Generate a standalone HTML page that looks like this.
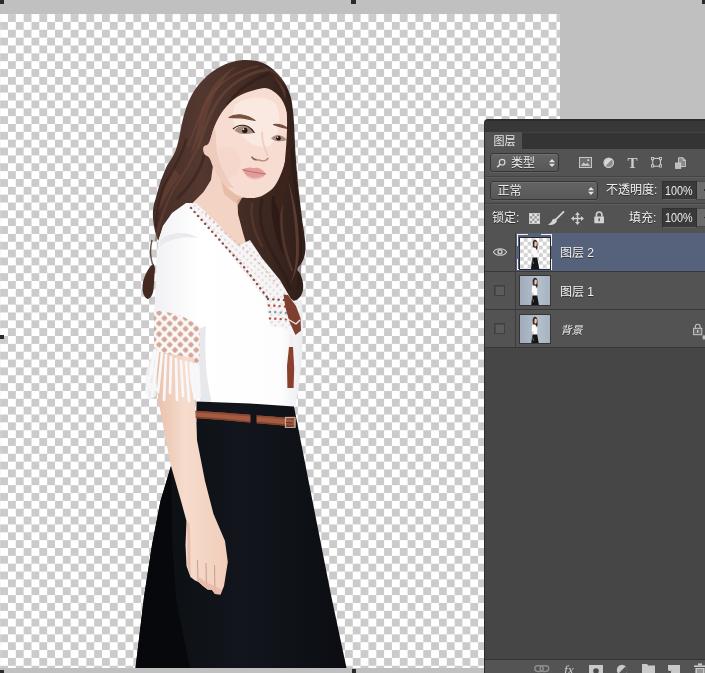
<!DOCTYPE html>
<html lang="zh-CN">
<head>
<meta charset="utf-8">
<title>图层</title>
<style>
html,body{margin:0;padding:0;}
body{width:705px;height:673px;overflow:hidden;background:#c0c0c0;position:relative;font-family:"Liberation Sans","Noto Sans CJK SC",sans-serif;}
#canvas{position:absolute;left:0;top:13.5px;width:560px;height:654.5px;overflow:hidden;
  background-color:#fff;
  background-image:conic-gradient(#cbcbcb 25%,#fff 0 50%,#cbcbcb 0 75%,#fff 0);
  background-size:15.68px 15.706px;background-position:0.15px 0.1px;}
#figure{position:absolute;left:0;top:0;width:705px;height:673px;}
.hd{position:absolute;background:#2a2a2a;}
#panel{will-change:transform;position:absolute;left:485px;top:119.6px;width:230px;height:560px;background:#464646;border-radius:3px 0 0 0;overflow:hidden;box-shadow:0 0 0 1px #2b2b2b;}
#ptop{position:absolute;left:0;top:0;width:100%;height:12.4px;background:#383838;box-shadow:inset 0 1px 0 #2c2c2c;}
#tabs{position:absolute;left:0;top:12.4px;width:100%;height:16.5px;background:#343434;box-shadow:inset 0 1px 0 #424242;}
#tab{position:absolute;left:0;top:0;width:37px;height:16.5px;background:#535353;color:#e8e8e8;font-size:11px;line-height:19px;text-indent:8.5px;}
#body{position:absolute;left:0;top:28.9px;width:100%;height:85px;background:#535353;}

.abs{position:absolute;}
.dd{position:absolute;box-sizing:border-box;border:1px solid #363636;border-radius:3px;background:linear-gradient(#646464,#585858);box-shadow:0 1px 0 #626262, inset 0 1px 0 #707070;}
.t{position:absolute;color:#f0f0f0;font-size:12px;white-space:nowrap;text-shadow:0 1px 0 #2c2c2c;}
.sep{position:absolute;left:0;width:100%;height:1px;background:#434343;box-shadow:0 1px 0 #5e5e5e;}
.inp{position:absolute;box-sizing:border-box;width:35.5px;height:19.5px;background:#3a3a3a;border:1px solid #303030;border-bottom-color:#606060;color:#ececec;font-size:12.4px;line-height:19px;text-align:center;}
.inp span{display:inline-block;transform:scaleX(0.87);transform-origin:50% 50%;margin:0 -3px;}
.btn{position:absolute;box-sizing:border-box;width:12px;height:19px;background:#6b6b6b;border-top:1px solid #4a4a4a;border-bottom:1px solid #4a4a4a;}
.btn:after{content:"";position:absolute;left:6.5px;top:7.5px;width:3px;height:1.5px;background:#2e2e2e;}
#layers{position:absolute;left:0;top:113.2px;width:100%;height:115.3px;background:#535353;}
.row{position:absolute;left:0;width:100%;height:38.5px;box-sizing:border-box;border-bottom:1px solid #383838;background:#535353;}
.row.sel{background:#56627b;}
.eyecol{position:absolute;left:0;top:0;width:30px;height:100%;background:#535353;border-right:1px solid #3c3c3c;}
.cb{position:absolute;left:9.3px;top:12.8px;width:11px;height:11px;box-sizing:border-box;border:1px solid #404040;background:#5c5c5c;box-shadow:inset 1px 1px 0 #4a4a4a;}
.thumb{position:absolute;left:34px;top:3.4px;width:30px;height:31px;border:1px solid #23272e;overflow:hidden;}
.thumb svg{display:block;}
.thumb.ph{left:33.5px;border-color:#363636;height:28.6px;background:linear-gradient(90deg,#9fabba,#b4c0cc 60%,#a6b2c0);}
.thumb.chk{left:33.6px;background-color:#fff;background-image:conic-gradient(#d2d2d2 25%,#fff 0 50%,#d2d2d2 0 75%,#fff 0);background-size:7.6px 7.6px;background-position:0 0;}
.brk{position:absolute;left:31.7px;top:1.2px;width:35.4px;height:35.8px;box-sizing:border-box;border:1.4px solid #f2f2f2;}
.brk:before{content:"";position:absolute;left:10.2px;right:10.2px;top:-2px;bottom:-2px;background:#56627b;}
.brk:after{content:"";position:absolute;top:10.4px;bottom:10.4px;left:-2px;right:-2px;background:#56627b;}
.lt{position:absolute;color:#f2f2f2;font-size:12px;line-height:18px;white-space:nowrap;text-shadow:0 1px 0 #333;}
#foot{position:absolute;left:0;top:538.8px;width:100%;height:20px;background:#545454;border-top:1.6px solid #343434;}
</style>
</head>
<body>
<div id="canvas"></div>
<svg id="figure" viewBox="0 0 705 673">
<defs>
  <clipPath id="cv"><rect x="0" y="13.5" width="560" height="654.5"/></clipPath>
  <linearGradient id="hairg" x1="0" y1="0" x2="1" y2="0">
    <stop offset="0" stop-color="#452d27"/><stop offset="0.3" stop-color="#533830"/><stop offset="0.65" stop-color="#412a23"/><stop offset="1" stop-color="#301f1b"/>
  </linearGradient>
  <linearGradient id="skirtg" x1="0" y1="0" x2="1" y2="0">
    <stop offset="0" stop-color="#0a0c10"/><stop offset="0.5" stop-color="#12161c"/><stop offset="1" stop-color="#0b0d12"/>
  </linearGradient>
  <linearGradient id="shirtg" x1="0" y1="0" x2="1" y2="0">
    <stop offset="0" stop-color="#f1f1f4"/><stop offset="0.3" stop-color="#ffffff"/><stop offset="0.85" stop-color="#fdfdfd"/><stop offset="1" stop-color="#ececf0"/>
  </linearGradient>
  <linearGradient id="armg" x1="0" y1="0" x2="1" y2="0">
    <stop offset="0" stop-color="#e9c0aa"/><stop offset="0.4" stop-color="#f6dccd"/><stop offset="1" stop-color="#f0cdb9"/>
  </linearGradient>
  <pattern id="lace" width="7.5" height="7.5" patternUnits="userSpaceOnUse" patternTransform="rotate(45)">
    <rect width="7.5" height="7.5" fill="#fbf9f8"/><rect x="1.4" y="1.4" width="4.7" height="4.7" rx="1.2" fill="#d3a697"/>
  </pattern>
  <pattern id="lace2" width="5" height="5" patternUnits="userSpaceOnUse" patternTransform="rotate(42)">
    <rect width="5" height="5" fill="#f7f5f5"/><rect x="1.6" y="1.6" width="1.9" height="1.9" rx="0.8" fill="#d6cfcf"/>
  </pattern>
  <g id="mini" transform="translate(-0.9,-1.2) scale(1.04)">
    <path d="M14.6 3 C16.4 2.6 17.6 4 17.6 6 L17.8 11 L16.6 13 L13.4 10.5 L13 6.5 C13 4.6 13.6 3.4 14.6 3 Z" fill="#3f2620"/>
    <path d="M15 4.6 L17 5 L17.1 8 L16 9.6 L14.6 8.6 Z" fill="#ecc9b8"/>
    <path d="M13.2 10 L15.8 10.6 L17.4 14 L17.4 20.2 L13 20.2 L12.2 17 L12.2 12.4 Z" fill="#fafafa"/>
    <path d="M12.4 17 L13.6 17 L14.6 24.6 L13.4 25.4 Z" fill="#e8c4b0"/>
    <path d="M13 20 L17.4 20 L19.4 31 L11.4 31 L12.2 24 Z" fill="#14161b"/>
    <path d="M12.6 20.8 L14 25.6 L13.4 26 Z" fill="#e8c4b0"/>
  </g>
</defs>
<g clip-path="url(#cv)">
  <!-- hair back -->
  <path id="hair" fill="url(#hairg)" d="M243 60 C254 59.500 264 62 272 68.500 C281 76 288 86 291 98 C293.500 110 294 122 294.500 134 C295 150 296.500 168 298 184 C299.500 198 301 210 302.500 222 C304 232 305.800 242 305.400 250 C305 256 303.500 261 300 265 C298 267 297 269 298 271 C300 273 302 277 302.800 282 C303.800 288 303 293 300 297 C298 299.500 295.500 300.500 293.500 301 L289 297 L262 262 L236 232 L190 204 L172 214 L163 226 L158.500 241 C156 236 153.800 228 153 218 C152.500 210 154 203 155.400 199.500 C157 193 159 187 160.700 181 C163 175 165 170 167.400 165 C170.500 160 173.500 156 175.500 151 C178 144 179.500 136 181 128 C183 118 185 110 188 103 C192 93 197 86 203 80 C213 69 227 61.500 243 60 Z"/>
  <path fill="#43291f" d="M153.500 263.500 C149 267 145 274 143 282 C141.500 290 143 296.500 147.500 299 C150.500 298.500 152.500 295 153.500 290 L155 268 Z"/>
  <path d="M152 240 C150 248 150 256 152.500 264" fill="none" stroke="#43291f" stroke-width="1.4" opacity="0.8"/>
  <!-- hair highlights -->
  <path d="M236 66 C222 74 208 88 202 108 C198 124 196 140 190 154 C198 144 204 128 208 112 C212 96 222 80 236 66 Z" fill="#6a4235" opacity="0.75"/>
  <path d="M262 66 C274 74 282 86 285 100 C287 92 284 80 276 72 Z" fill="#6a4235" opacity="0.6"/>
  <path d="M288 180 C292 200 296 224 296 250 C296 264 294 276 290 284 C298 272 300 256 299 238 C298 218 294 198 288 180 Z" fill="#6e4638" opacity="0.7"/>
  <path d="M272 196 C270 214 274 236 284 256 C280 238 278 216 280 198 Z" fill="#2a1612" opacity="0.7"/>
  <path d="M174 168 C166 182 160 198 157 214 C163 202 171 188 180 176 Z" fill="#6a4235" opacity="0.6"/>
  <g fill="none" stroke-linecap="round">
    <path d="M266 70 C250 72 232 82 220 98 C210 112 204 130 198 148" stroke="#6f4a3c" stroke-width="3" opacity="0.55"/>
    <path d="M258 66 C240 70 222 80 210 96 C200 110 196 128 188 146" stroke="#70493b" stroke-width="2" opacity="0.5"/>
    <path d="M268 74 C252 80 238 90 228 104" stroke="#2e1a15" stroke-width="3" opacity="0.55"/>
    <path d="M270 72 C280 78 288 90 291 104" stroke="#2c1914" stroke-width="2.5" opacity="0.5"/>
    <path d="M196 150 C190 166 180 178 172 192 C166 204 160 220 156 240" stroke="#6d4638" stroke-width="2.5" opacity="0.5"/>
    <path d="M204 156 C200 172 190 186 178 198" stroke="#2e1a15" stroke-width="3" opacity="0.45"/>
    <path d="M186 140 C182 156 172 172 164 186 C160 196 157 210 156 226" stroke="#2f1b16" stroke-width="2.5" opacity="0.45"/>
    <path d="M292 150 C294 176 298 204 300 232 C301 254 300 272 298 288" stroke="#2a1712" stroke-width="3" opacity="0.5"/>
    <path d="M282 206 C280 226 284 250 292 270" stroke="#6e4638" stroke-width="2.5" opacity="0.5"/>
    <path d="M262 200 C258 216 262 236 274 256 C280 266 286 276 290 288" stroke="#2a1712" stroke-width="3" opacity="0.5"/>
    <path d="M252 204 C250 218 254 232 262 246" stroke="#684234" stroke-width="2.5" opacity="0.5"/>
  </g>
  <!-- neck / chest skin -->
  <path fill="#f3d3c3" d="M214 158 L211 180 L203.500 192 L192 203.500 L199 211 L221 234 L236 245.500 L246 243 L243 233 L238 214 L237.500 200 L246 196 L262 186 Z"/>
  <path fill="#e4b8a4" d="M219 170 L244 194 L238 205 L224 194 Z" opacity="0.85"/>
  <!-- face -->
  <path fill="#f7ddd1" d="M209.0 143.0 C210.8 139.5 212.2 131.5 214.6 126.0 C217.0 120.5 219.8 114.8 223.5 110.0 C227.2 105.2 231.8 100.3 237.0 97.0 C242.2 93.7 249.5 91.4 254.7 90.0 C259.9 88.6 263.6 87.0 268.0 88.5 C272.4 90.0 278.1 94.2 281.4 99.0 C284.7 103.8 286.7 111.0 288.0 117.0 C289.3 123.0 289.2 128.8 289.0 134.7 C288.8 140.6 288.1 146.6 287.0 152.5 C285.9 158.4 284.6 164.4 282.5 170.0 C280.4 175.6 277.8 181.8 274.7 186.0 C271.6 190.2 267.3 193.0 263.6 195.0 C259.9 197.0 256.6 197.8 252.5 198.0 C248.4 198.2 243.5 198.0 239.0 196.0 C234.5 194.0 229.8 190.3 225.7 186.0 C221.6 181.7 217.3 174.7 214.6 170.0 C211.9 165.3 211.2 160.7 209.5 158.0 C207.8 155.3 205.5 155.8 204.5 154.0 C203.5 152.2 202.8 148.8 203.6 147.0 C204.3 145.2 207.2 146.5 209.0 143.0 Z"/>
  <path fill="#fbece5" d="M236 104 C248 96 266 95 276 104 C282 116 280 134 270 146 C256 150 242 140 234 124 C232 116 232 110 236 104 Z" opacity="0.75"/>
  <path fill="#f5cfc5" d="M218 148 C226 144 236 148 240 156 C242 168 236 178 228 180 C222 172 218 160 218 148 Z" opacity="0.4"/>
  <path fill="#e9c3b4" d="M209 143 C211 138 213 130 214.600 126 C216 134 216 146 218 156 C220 166 226 178 234 188 C230 188 226 186 225.700 186 C221 181 217 175 214.600 170 C212 165 211 160 209.500 158 C208 155 205.500 156 204.500 154 C203.500 152 203 149 203.600 147 C204.500 145 207 146.500 209 143 Z" opacity="0.7"/>
  <!-- brows / eyes / nose / lips -->
  <path d="M229 117.500 C233 114.800 238 114.500 242 115 C247 115.600 251 117.600 255 120.500 C250 119.200 246 118.200 241 117.800 C237 117.500 233 117.600 229 117.500 Z" fill="#77503f" stroke="#77503f" stroke-width="1.2" stroke-linejoin="round"/>
  <path d="M273.500 124.500 C278 123.800 284 125.500 288 128.500 C283 127.500 278 126.600 273.500 124.500 Z" fill="#77503f" stroke="#77503f" stroke-width="1.2" stroke-linejoin="round"/>
  <path d="M234.500 130.500 C237 126.800 241 125.500 245 126 C249 126.600 252 129.500 254 133 C251 133.500 248 134 244 134 C240 133.800 237 132.500 234.500 130.500 Z" fill="#a88a80"/>
  <path d="M233 129 C237 125.500 243 124.500 248 126.500 C251 128 253 130.500 254.500 133" fill="none" stroke="#2e1c16" stroke-width="1.1"/>
  <circle cx="244.800" cy="130.400" r="2.700" fill="#2a1a14"/><circle cx="243.400" cy="129.200" r="0.900" fill="#f4ece8"/>
  <path d="M271 138.500 C273 135.800 276 134.600 279 135 C282 135.500 285 137.500 287 140 C284 141 281 141.400 278 141.200 C275 141 273 140 271 138.500 Z" fill="#a88a80"/>
  <circle cx="278.500" cy="138.200" r="2.300" fill="#24150f"/><circle cx="277.600" cy="137.300" r="0.800" fill="#f4ece8"/>
  <path d="M262 132 C262 140 264 148 268 156" fill="none" stroke="#eccabb" stroke-width="2" opacity="0.8"/>
  <path d="M251.500 156.500 C253 159.500 256 160.500 259 159.800 C262 161.500 266 161 268.500 158" fill="none" stroke="#b98775" stroke-width="1.5"/>
  <path d="M252 157 C253 158.800 255 159.600 256.500 159" fill="none" stroke="#7c5448" stroke-width="1.3"/>
  <path d="M242.400 169.500 C246 167.500 250 166.800 253.500 168.200 C256 167.200 259 167.600 261.500 169.500 C263.500 170.800 265 172.500 265.800 174 C263 177.500 259 179.500 254.500 179.200 C249 178.800 245 175 242.400 169.500 Z" fill="#e39c9a"/>
  <path d="M242.400 169.500 C248 171.500 257 172.800 265.800 174" fill="none" stroke="#b86e72" stroke-width="1"/>
  <path d="M247 176 C251 178.500 257 179 262 177" fill="none" stroke="#f1b9b4" stroke-width="1.4"/>
  <!-- front hair lock over right cheek -->
  <path d="M286 102 C291 120 292 150 289 176 C287 192 283 204 280 214 L274 200 C280 190 284 176 285 160 C287 140 288 120 286 102 Z" fill="#3c231c"/>
  <!-- shirt -->
  <path id="shirt" fill="url(#shirtg)" d="M186 203 L192 203 L214 224 L234 248 L262 262 L289 297 L293.500 301 L302 300 L303 324 L302 358 L298.500 390 L295 408 L197 403 L198 360 L196 330 L154 313 L155 300 L155.500 288 L156.500 262 L158.500 240 L163 226 L172 213 Z"/>
  <path d="M196 330 L200 403 L212 403 C206 380 204 352 206 326 Z" fill="#e4e4ea" opacity="0.9"/>
  <path d="M160 240 C170 232 186 230 198 238 C186 236 172 238 160 246 Z" fill="#e9e9ee"/>
  <!-- lace collar -->
  <path fill="url(#lace2)" d="M188 204 L196 203 L216 222 L238 246 L250 240 L262 258 L280 280 L291 299 L299 305 L301 322 L298 330 L270 326 L266 300 L244 272 L222 244 L204 222 Z"/>
  <g fill="none" stroke="#8c4c40" stroke-width="2.4" stroke-linecap="round" stroke-dasharray="0.1 5.2">
    <path d="M191 208 L207 226 L226 247 L244 267 L267 297"/>
    <path d="M268 299 L284 300" stroke="#7a4a48"/><path d="M269 305.500 L286 306.500" stroke="#b8524c"/><path d="M270 312 L288 313" stroke="#8f9aac"/><path d="M270 318.500 L288 319.500" stroke="#b8524c"/>
  </g>
  <path d="M206 214 L224 232 L246 250 L262 266 L280 288" fill="none" stroke="#dcbcb4" stroke-width="2" stroke-linecap="round" stroke-dasharray="0.1 5.5"/>
  <!-- tassel -->
  <path d="M283.400 294.500 L288 295 L296 306 L300.500 318 L301 330.500 L295.500 335 L289.500 322 L285.500 308 Z" fill="#7d3f2f"/>
  <path d="M286 318 L296 324 L300 320" fill="none" stroke="#f3eeee" stroke-width="1.3"/>
  <path d="M289 334 L294 336 L293.500 347 L289.500 347 Z" fill="#f4efee"/>
  <path d="M289 347 L293 347 L294.200 368 L293.600 388 L287.400 388 L287 366 Z" fill="#8a3f2e"/>
  <!-- lace sleeve -->
  <path fill="url(#lace)" d="M154 312 L161 310.500 L182 316 L199.500 326 L199.500 365 L186 362 L168 355 L154 349 Z"/>
  <!-- arm -->
  <path id="arm" fill="url(#armg)" d="M156 352 L194 358 L194.500 398 L197 440 L205 481 L213.500 514 L225 541 L227.800 562 L224 586 L220.500 594.500 L215 594 L212 590 L207.500 589.500 L203 586 L198.500 582 L195 580.500 L190.500 577 L186.500 566 L185.500 545 L186.500 521 L181 501 L171 466 L164.500 432 L158.500 400 L156 380 Z"/>
  
  
  <!-- skirt -->
  <path id="skirt" fill="url(#skirtg)" d="M196.500 401.500 L250 403.500 L294 406.500 L299 432 L307 473 L319 534 L331 595 L346.500 668 L135.500 668 L144 597 L152 545 L160.500 501 L171 466 L182 466 L196.500 440 Z"/>
  <path d="M171 466 L160.500 501 L152 545 L144 597 L135.500 668 L190 668 L176 600 L172 540 Z" fill="#07080b"/>
  <!-- belt -->
  <path d="M194 410.800 L222 412.600 L249.500 414.800 L272 416.600 L295.500 418.800 L295.500 426.600 L272 424.400 L249.500 422.600 L222 420 L194 418 Z" fill="#a65b41"/>
  <path d="M194 410.800 L222 412.600 L249.500 414.800 L272 416.600 L295.500 418.800 L295.500 420.400 L272 418.200 L249.500 416.400 L222 414.200 L194 412.400 Z" fill="#8a4a34"/>
  <path d="M194 416.600 L222 418.600 L249.500 421.200 L272 423 L295.500 425.200 L295.500 426.600 L272 424.400 L249.500 422.600 L222 420 L194 418 Z" fill="#7c402d"/>
  <rect x="250.500" y="413.500" width="6" height="11" fill="#111318"/>
  <rect x="285.500" y="417.500" width="9.500" height="9.800" fill="none" stroke="#c9a990" stroke-width="1.300"/>
  <path d="M286 422.500 L293 423" stroke="#5a3222" stroke-width="1.2"/>
  <!-- arm redraw over skirt -->
  <use href="#arm"/>
  
  
  <path d="M197.500 560 L198 581 M206 563 L206.500 588 M214.500 565 L215 592.500" stroke="#cf9c8a" stroke-width="1" fill="none"/>
  <path d="M198.500 582 L203 586 L207.500 589.500 L212 590 L215 594 L220.500 594.500 L222 590 L214 586 L206 582 L199 577 Z" fill="#e8b7a8" opacity="0.8"/>
  <path d="M186.500 521 C188 535 187 552 187.500 566 L191 577 C190 560 191 540 189.500 524 Z" fill="#e2b39f" opacity="0.7"/>
  <!-- fringe -->
  <path d="M154 348 L146 372 L145 392 L149 400 L156 396 L158 352 Z" fill="#f4f4f6" opacity="0.8"/>
  <path d="M189 362 L199.500 365 L201 398 L194 400 L190 380 Z" fill="#f6f6f8"/>
  <g stroke="#f8f8fa" stroke-width="2.7" stroke-linecap="round" fill="none">
    <path d="M155 350 L147 390"/><path d="M158 351 L152 397"/><path d="M162 353 L158 392"/><path d="M166 355 L164 400"/><path d="M171 357 L170 393"/><path d="M176 359 L177 400"/><path d="M181 361 L183 396"/><path d="M186 362 L189 401"/><path d="M191 363 L195 398"/><path d="M196 364 L199 390"/>
  </g>
</g>
</svg>
<div class="hd" style="left:0;top:0;width:3.9px;height:3.7px"></div>
<div class="hd" style="left:351px;top:0;width:4.8px;height:3.7px"></div>
<div class="hd" style="left:702px;top:0;width:3px;height:3.8px"></div>
<div class="hd" style="left:0;top:334.5px;width:3.8px;height:4.7px"></div>
<div class="hd" style="left:0;top:669.8px;width:3.8px;height:4px"></div>
<div class="hd" style="left:351.5px;top:668.5px;width:4px;height:5px"></div>
<div id="panel">
  <div id="ptop"></div>
  <div id="tabs"><div id="tab">图层</div></div>
  <div id="body">
    <div class="dd" style="left:5px;top:4px;width:69px;height:19.5px;">
      <svg class="abs" style="left:5px;top:4.5px" width="10.5" height="10.5" viewBox="0 0 12 12"><circle cx="7" cy="4.8" r="3.2" fill="none" stroke="#d6d6d6" stroke-width="1.4"/><path d="M4.6 7.2 L1.4 10.6" stroke="#d6d6d6" stroke-width="1.8"/></svg>
      <span class="t" style="left:20px;top:0;line-height:18.5px;">类型</span>
      <svg class="abs" style="left:58px;top:5.5px" width="6" height="8" viewBox="0 0 6 8"><path d="M0 3.2 L3 0 L6 3.2 Z M0 4.8 L3 8 L6 4.8 Z" fill="#e4e4e4"/></svg>
    </div>
    <!-- filter icons -->
    <svg class="abs" style="left:94px;top:8.5px" width="13" height="11" viewBox="0 0 14 12"><rect x="0.5" y="0.5" width="13" height="11" fill="#6e6e6e" stroke="#cfcfcf"/><path d="M2 9.5 L5 6 L7 8 L9 6.5 L12 9.5 Z" fill="#cfcfcf"/><rect x="9" y="2.5" width="2" height="2" fill="#cfcfcf"/></svg>
    <svg class="abs" style="left:118px;top:8.5px" width="11.4" height="11.4" viewBox="0 0 12 12"><circle cx="6" cy="6" r="5" fill="#8d8d8d" stroke="#cfcfcf" stroke-width="1.2"/><path d="M2.5 9.5 A5 5 0 0 1 9.5 2.5 Z" fill="#d8d8d8"/></svg>
    <span class="abs" style="left:141.5px;top:5px;width:12px;text-align:center;font-family:'Liberation Serif',serif;font-weight:bold;font-size:15px;line-height:18px;color:#cdcdcd;">T</span>
    <svg class="abs" style="left:166px;top:8.5px" width="11.2" height="10.6" viewBox="0 0 13 12"><rect x="2" y="1.5" width="9" height="9" fill="none" stroke="#cfcfcf" stroke-width="1.2"/><g fill="#535353" stroke="#d8d8d8" stroke-width="0.9"><rect x="0.5" y="0.5" width="2.6" height="2.6"/><rect x="9.9" y="0.5" width="2.6" height="2.6"/><rect x="0.5" y="8.9" width="2.6" height="2.6"/><rect x="9.9" y="8.9" width="2.6" height="2.6"/></g></svg>
    <svg class="abs" style="left:189.5px;top:7.8px" width="11.6" height="12" viewBox="0 0 13 13"><path d="M4 0.6 H9 L12 3.6 V10.5 H4 Z" fill="#8a8a8a" stroke="#d0d0d0" stroke-width="1"/><path d="M9 0.6 V3.6 H12" fill="none" stroke="#d0d0d0" stroke-width="1"/><rect x="0.5" y="6.5" width="6" height="6" fill="#bdbdbd" stroke="#d8d8d8" stroke-width="0.8"/></svg>
    <div class="sep" style="top:27px"></div>
    <!-- blend row -->
    <div class="dd" style="left:5px;top:32px;width:107.5px;height:19.5px;">
      <span class="t" style="left:6.5px;top:0;line-height:18.5px;">正常</span>
      <svg class="abs" style="left:97px;top:5.5px" width="6" height="8" viewBox="0 0 6 8"><path d="M0 3.2 L3 0 L6 3.2 Z M0 4.8 L3 8 L6 4.8 Z" fill="#e4e4e4"/></svg>
    </div>
    <span class="t" style="left:121px;top:32px;line-height:18px;">不透明度:</span>
    <div class="inp" style="left:176.5px;top:32.1px;"><span>100%</span></div>
    <div class="btn" style="left:212.2px;top:32.1px;"></div>
    <div class="sep" style="top:54.5px"></div>
    <!-- lock row -->
    <span class="t" style="left:7px;top:60px;line-height:18px;">锁定:</span>
    <svg class="abs" style="left:43.5px;top:64px" width="11" height="11" viewBox="0 0 12 12"><rect x="0.5" y="0.5" width="11" height="11" fill="#9a9a9a" stroke="#d0d0d0"/><g fill="#e6e6e6"><rect x="1" y="1" width="2.5" height="2.5"/><rect x="6" y="1" width="2.5" height="2.5"/><rect x="3.5" y="3.5" width="2.5" height="2.5"/><rect x="8.5" y="3.5" width="2.5" height="2.5"/><rect x="1" y="6" width="2.5" height="2.5"/><rect x="6" y="6" width="2.5" height="2.5"/><rect x="3.5" y="8.5" width="2.5" height="2.5"/><rect x="8.5" y="8.5" width="2.5" height="2.5"/></g></svg>
    <svg class="abs" style="left:62px;top:62px" width="18" height="15" viewBox="0 0 18 15"><path d="M16.5 0.8 L8.2 9.2" stroke="#d4d4d4" stroke-width="1.8" stroke-linecap="round"/><path d="M8.6 8.2 L10 10 C8.5 13.5 4.5 14.6 0.8 13.6 C3.6 12.6 4.6 10.6 5.6 8.6 C6.6 7.6 7.8 7.6 8.6 8.2 Z" fill="#d4d4d4"/></svg>
    <svg class="abs" style="left:86px;top:63.5px" width="13" height="13" viewBox="0 0 14 14"><path d="M7 0 L9.6 3.2 H7.8 V6.2 H10.8 V4.4 L14 7 L10.8 9.6 V7.8 H7.8 V10.8 H9.6 L7 14 L4.4 10.8 H6.2 V7.8 H3.2 V9.6 L0 7 L3.2 4.4 V6.2 H6.2 V3.2 H4.4 Z" fill="#cfcfcf"/></svg>
    <svg class="abs" style="left:108.6px;top:62.2px" width="10.4" height="12.6" viewBox="0 0 11 13"><path d="M2.6 6 V3.8 A2.9 2.9 0 0 1 8.4 3.8 V6" fill="none" stroke="#d2d2d2" stroke-width="1.7"/><rect x="0.3" y="5.6" width="10.4" height="7.2" rx="0.8" fill="#d2d2d2"/><rect x="4.7" y="7.6" width="1.6" height="3" fill="#555"/></svg>
    <span class="t" style="left:144px;top:60px;line-height:18px;">填充:</span>
    <div class="inp" style="left:176.5px;top:59.5px;"><span>100%</span></div>
    <div class="btn" style="left:212.2px;top:59.5px;"></div>
  </div>
  <!-- layers -->
  <div id="layers">
    <div class="row sel" style="top:0;height:39.1px">
      <div class="eyecol"><svg class="abs" style="left:8px;top:14px" width="14" height="10" viewBox="0 0 14 10"><path d="M0.4 5 C3 0.6 11 0.6 13.6 5 C11 9.4 3 9.4 0.4 5 Z" fill="#535353" stroke="#c8c8c8" stroke-width="1.1"/><circle cx="7" cy="4.8" r="2.7" fill="#c8c8c8"/><circle cx="7" cy="4.8" r="1.2" fill="#4a4a4a"/></svg></div>
      <div class="brk"></div>
      <div class="thumb chk"><svg width="30" height="31" viewBox="0 0 30 31"><use href="#mini"/></svg></div>
      <span class="lt" style="left:75px;top:11px;">图层 2</span>
    </div>
    <div class="row" style="top:39.1px;height:38.1px">
      <div class="eyecol"><div class="cb"></div></div>
      <div class="thumb ph" style="top:3.2px"><svg width="30" height="31" viewBox="0 0 30 31"><use href="#mini"/></svg></div>
      <span class="lt" style="left:75px;top:11px;">图层 1</span>
    </div>
    <div class="row" style="top:77.2px;height:38.1px">
      <div class="eyecol"><div class="cb"></div></div>
      <div class="thumb ph" style="top:3.2px"><svg width="30" height="31" viewBox="0 0 30 31"><use href="#mini"/></svg></div>
      <span class="lt" style="left:75.5px;top:11px;font-style:italic;font-size:11px;">背景</span>
      <svg class="abs" style="left:208px;top:13px" width="12" height="18" viewBox="0 0 12 18"><path d="M2.3 5.5 V3.6 A2.4 2.4 0 0 1 7.1 3.6 V5.5" fill="none" stroke="#c6c6c6" stroke-width="1.1"/><rect x="0.6" y="5.3" width="8.2" height="6.4" fill="#6a6a6a" stroke="#c6c6c6" stroke-width="1"/><rect x="4.1" y="7.2" width="1.2" height="2.4" fill="#e8e8e8"/><rect x="9.6" y="12.4" width="3" height="4" fill="#bdbdbd"/></svg>
    </div>
  </div>
  <div id="foot">
    <svg class="abs" style="left:49px;top:5px" width="16" height="9" viewBox="0 0 16 9"><rect x="0.8" y="0.8" width="8.5" height="5.6" rx="2.8" fill="none" stroke="#8c8c8c" stroke-width="1.5"/><rect x="6.2" y="0.8" width="8.5" height="5.6" rx="2.8" fill="none" stroke="#8c8c8c" stroke-width="1.5"/></svg>
    <span class="abs" style="left:79px;top:3.5px;font-family:'Liberation Serif',serif;font-style:italic;font-size:13.5px;line-height:14px;color:#cccccc;">fx</span>
    <svg class="abs" style="left:104px;top:5px" width="14" height="10" viewBox="0 0 14 10"><rect x="0" y="0" width="14" height="10" fill="#c9c9c9"/><circle cx="7" cy="6" r="2.8" fill="#4a4a4a"/></svg>
    <svg class="abs" style="left:131px;top:4px" width="12" height="12" viewBox="0 0 12 12"><circle cx="6" cy="6" r="5.2" fill="#c9c9c9"/><path d="M2.3 9.7 A5.2 5.2 0 0 0 9.7 2.3 Z" fill="#555"/></svg>
    <svg class="abs" style="left:157px;top:4px" width="13" height="10" viewBox="0 0 13 10"><path d="M0 0 H5 L6.2 1.6 H13 V10 H0 Z" fill="#c9c9c9"/></svg>
    <svg class="abs" style="left:183px;top:5px" width="12" height="10" viewBox="0 0 12 10"><path d="M0 0 H12 V10 H4 V5 H0 Z" fill="#c9c9c9"/><path d="M0.5 5.5 H3.5 V9.5" fill="none" stroke="#c9c9c9"/></svg>
    <svg class="abs" style="left:209px;top:3px" width="12" height="12" viewBox="0 0 12 12"><rect x="0" y="2.4" width="12" height="1.6" fill="#c9c9c9"/><rect x="4" y="0.4" width="4" height="2" fill="#c9c9c9"/><path d="M1.4 5 H10.6 V12 H1.4 Z" fill="#c9c9c9"/><path d="M4 6 V12 M6 6 V12 M8 6 V12" stroke="#555" stroke-width="0.9"/></svg>
  </div>
</div>
</body>
</html>
